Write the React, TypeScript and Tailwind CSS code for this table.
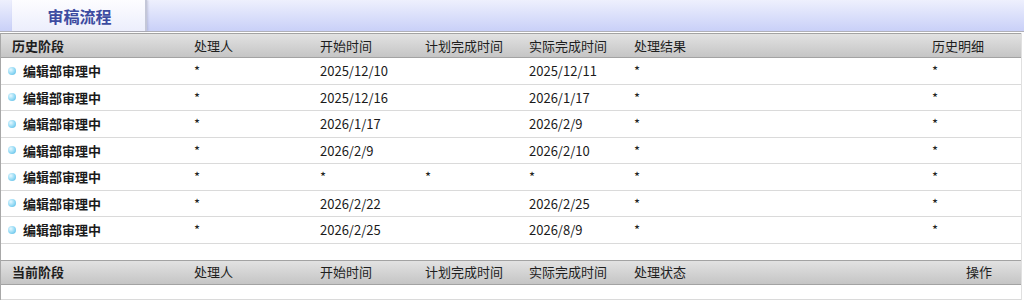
import React from 'react';

const font = { fontFamily: '"Noto Sans CJK SC", "Noto Sans", sans-serif' };

const rows = [
  ['*', '2025/12/10', '', '2025/12/11', '*', '*'],
  ['*', '2025/12/16', '', '2026/1/17', '*', '*'],
  ['*', '2026/1/17', '', '2026/2/9', '*', '*'],
  ['*', '2026/2/9', '', '2026/2/10', '*', '*'],
  ['*', '*', '*', '*', '*', '*'],
  ['*', '2026/2/22', '', '2026/2/25', '*', '*'],
  ['*', '2026/2/25', '', '2026/8/9', '*', '*'],
];

function Bullet() {
  return (
    <span className="inline-block w-[8px] h-[8px] rounded-full bg-[radial-gradient(circle_at_35%_35%,#e6f8ff_0%,#8fd8f4_55%,#4fb3e0_100%)] mr-[7px] shrink-0" />
  );
}

function HeaderRow({ cols, last, lastPad }: { cols: string[]; last: string; lastPad: string }) {
  return (
    <div className="flex items-center h-[25px] border-y border-[#a3a3a3] bg-gradient-to-b from-[#e2e2e2] to-[#c5c5c5] text-[13px] text-[#1e1e1e]">
      <div className="w-[193px] pl-[11px] font-bold">{cols[0]}</div>
      <div className="w-[126px]">{cols[1]}</div>
      <div className="w-[105px]">{cols[2]}</div>
      <div className="w-[104px]">{cols[3]}</div>
      <div className="w-[105px]">{cols[4]}</div>
      <div className="w-[100px]">{cols[5]}</div>
      <div className={`flex-1 ${lastPad}`}>{last}</div>
    </div>
  );
}

export default function App() {
  return (
    <div className="w-[1024px] h-[302px] bg-white overflow-hidden" style={font}>
      {/* tab bar */}
      <div className="h-[32px] flex items-end pl-[12px] bg-gradient-to-b from-[#eef0fd] to-[#c9d0f8] border-b border-[#b0b0b8]">
        <div className="w-[135px] h-[31px] flex items-center justify-center bg-gradient-to-b from-[#fdfdff] to-[#eceefc] border-r-2 border-[#c4c7d8] shadow-[1px_0_2px_rgba(120,120,150,0.3)]">
          <span className="text-[16px] font-bold text-[#3c4ba0] pl-[2px]">审稿流程</span>
        </div>
      </div>

      <div className="mt-[1px] border-l border-[#a8a8a8] border-r border-r-[#e0e0e0] mr-[2px]">
        <HeaderRow
          cols={['历史阶段', '处理人', '开始时间', '计划完成时间', '实际完成时间', '处理结果']}
          last="历史明细"
          lastPad="pl-[198px]"
        />
        {rows.map((r, i) => (
          <div key={i} className="flex items-center h-[26.5px] border-b border-[#dadada] text-[13px] text-[#1a1a1a]">
            <div className="w-[193px] pl-[7px] flex items-center font-bold">
              <Bullet />
              编辑部审理中
            </div>
            <div className="w-[126px]">{r[0]}</div>
            <div className="w-[105px]">{r[1]}</div>
            <div className="w-[104px]">{r[2]}</div>
            <div className="w-[105px]">{r[3]}</div>
            <div className="w-[298px]">{r[4]}</div>
            <div className="flex-1">{r[5]}</div>
          </div>
        ))}
        <div className="h-[16px]" />
        <HeaderRow
          cols={['当前阶段', '处理人', '开始时间', '计划完成时间', '实际完成时间', '处理状态']}
          last="操作"
          lastPad="pl-[232px]"
        />
        <div className="h-[15px] border-b border-[#dadada]" />
      </div>
    </div>
  );
}
